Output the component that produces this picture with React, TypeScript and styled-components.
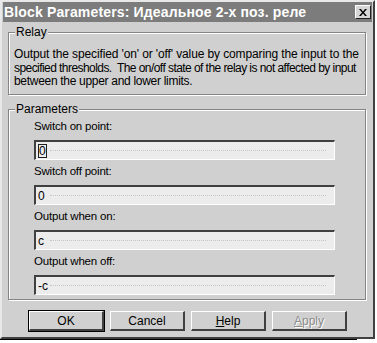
import styled, { createGlobalStyle } from "styled-components";

const GlobalStyle = createGlobalStyle`
  html, body {
    margin: 0;
    padding: 0;
    background: #ffffff;
  }
  body {
    font-family: "Liberation Sans", Arial, sans-serif;
    font-size: 11px;
    color: #000;
  }
`;

const Page = styled.div`
  width: 377px;
  height: 343px;
  overflow: hidden;
`;

const Window = styled.div`
  width: 375px;
  height: 339px;
  box-sizing: border-box;
  background: #d0d0d0;
  border-top: 2px solid #e8e8e8;
  border-left: 2px solid #e8e8e8;
  border-right: 2px solid #404040;
  border-bottom: 2px solid #404040;
  display: flex;
  flex-direction: column;
`;

const TitleBar = styled.div`
  height: 20px;
  margin: 0 1px;
  background: #7c7c7c;
  display: flex;
  align-items: center;
  justify-content: space-between;
  padding: 0 1px 0 1px;
`;

const Title = styled.span`
  color: #fff;
  font-weight: bold;
  font-size: 14px;
  letter-spacing: 0.15px;
  white-space: nowrap;
`;

const CloseButton = styled.div`
  width: 16px;
  height: 14px;
  box-sizing: border-box;
  background: #d6d6d6;
  border-top: 1px solid #fff;
  border-left: 1px solid #fff;
  border-right: 1px solid #202020;
  border-bottom: 1px solid #202020;
  display: flex;
  align-items: center;
  justify-content: center;
`;

const Body = styled.div`
  flex: 1;
  display: flex;
  flex-direction: column;
  padding: 4px 7px 0 6px;
`;

const Group = styled.fieldset<{ $height: number }>`
  margin: 0;
  height: ${(p) => p.$height}px;
  box-sizing: border-box;
  border: 1px solid #858585;
  box-shadow: 1px 1px 0 #fff, inset 1px 1px 0 #fff;
  padding: 0;
  min-width: 0;
`;

const Legend = styled.legend`
  margin-left: 6px;
  padding: 0 1px;
  font-size: 12px;
  line-height: 13px;
  background: #d0d0d0;
`;

const Description = styled.div`
  margin: 9px 0 0 5px;
  font-size: 12px;
  line-height: 13.5px;
  white-space: nowrap;
`;

const Line = styled.div<{ $spacing: number }>`
  letter-spacing: ${(p) => p.$spacing}px;
`;

const FieldList = styled.div`
  display: flex;
  flex-direction: column;
  padding: 3px 0 0 25px;
`;

const Field = styled.div`
  display: flex;
  flex-direction: column;
  height: 45px;
`;

const Label = styled.div`
  font-size: 11.5px;
  line-height: 14px;
  height: 21px;
  letter-spacing: -0.2px;
`;

const Input = styled.div<{ $focus?: boolean }>`
  width: 301px;
  height: 20px;
  box-sizing: border-box;
  background: #ececec;
  border-top: 2px solid #404040;
  border-left: 2px solid #404040;
  border-right: 1px solid #fff;
  border-bottom: 1px solid #fff;
  display: flex;
  align-items: center;
  padding-left: 2px;
  font-size: 12px;
  position: relative;
  & > span {
    ${(p) =>
      p.$focus
        ? "outline: 1px solid #202020; outline-offset: -1px; padding: 0 1px;"
        : ""}
  }
  &::after {
    content: "";
    position: absolute;
    left: 14px;
    right: 8px;
    top: 8px;
    border-top: 1px dotted #c4c4c4;
  }
`;

const ButtonRow = styled.div`
  display: flex;
  gap: 6px;
  padding: 11px 0 0 21px;
`;

const Button = styled.div<{ $default?: boolean; $disabled?: boolean }>`
  width: 75px;
  height: 20px;
  box-sizing: border-box;
  display: flex;
  align-items: center;
  justify-content: center;
  font-size: 12px;
  background: #d0d0d0;
  border-top: 1px solid #fff;
  border-left: 1px solid #fff;
  border-right: 2px solid #404040;
  border-bottom: 2px solid #404040;
  color: ${(p) => (p.$disabled ? "#8c8c8c" : "#000")};
  text-shadow: ${(p) => (p.$disabled ? "1px 1px 0 #fff" : "none")};
  outline: ${(p) => (p.$default ? "1px solid #000" : "none")};
  & u {
    text-decoration: underline;
  }
`;

const Underlay = styled.div`
  height: 4px;
  border-top: 1px solid #000;
  margin: 0 20px 0 0;
`;

function CloseIcon() {
  return (
    <svg width="8" height="7" viewBox="0 0 8 7">
      <path d="M0 0 L2 0 L4 2.5 L6 0 L8 0 L5 3.5 L8 7 L6 7 L4 4.5 L2 7 L0 7 L3 3.5 Z" fill="#000" />
    </svg>
  );
}

const fields = [
  { label: "Switch on point:", value: "0", focus: true },
  { label: "Switch off point:", value: "0" },
  { label: "Output when on:", value: "c" },
  { label: "Output when off:", value: "-c" },
];

export default function App() {
  return (
    <Page>
      <GlobalStyle />
      <Window>
        <TitleBar>
          <Title>Block Parameters: Идеальное 2-х поз. реле</Title>
          <CloseButton>
            <CloseIcon />
          </CloseButton>
        </TitleBar>
        <Body>
          <Group $height={69}>
            <Legend>Relay</Legend>
            <Description>
              <Line $spacing={-0.12}>
                Output the specified 'on' or 'off' value by comparing the input to the
              </Line>
              <Line $spacing={-0.56}>
                specified thresholds.&nbsp; The on/off state of the relay is not affected by input
              </Line>
              <Line $spacing={-0.3}>between the upper and lower limits.</Line>
            </Description>
          </Group>
          <div style={{ height: 8 }} />
          <Group $height={197}>
            <Legend>Parameters</Legend>
            <FieldList>
              {fields.map((f) => (
                <Field key={f.label}>
                  <Label>{f.label}</Label>
                  <Input $focus={f.focus}>
                    <span>{f.value}</span>
                  </Input>
                </Field>
              ))}
            </FieldList>
          </Group>
          <ButtonRow>
            <Button $default>OK</Button>
            <Button>Cancel</Button>
            <Button>
              <u>H</u>elp
            </Button>
            <Button $disabled>
              <u>A</u>pply
            </Button>
          </ButtonRow>
        </Body>
      </Window>
      <Underlay />
    </Page>
  );
}
